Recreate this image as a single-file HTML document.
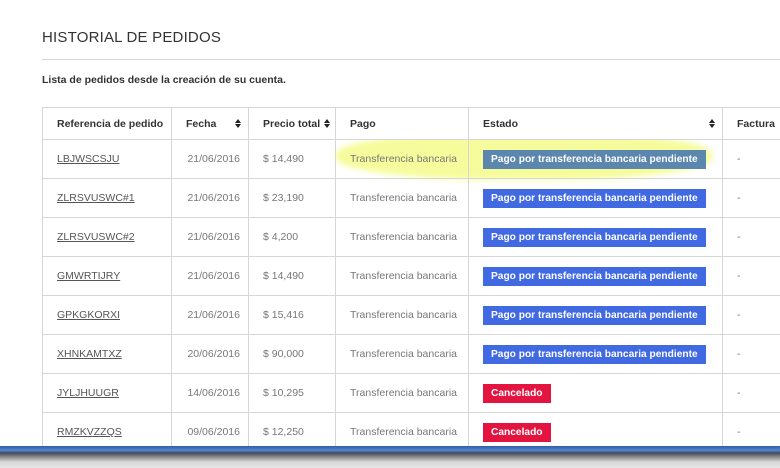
<!DOCTYPE html>
<html><head><meta charset="utf-8"><style>
*{margin:0;padding:0;box-sizing:border-box}
body{width:780px;height:468px;overflow:hidden;background:#fff;font-family:"Liberation Sans",sans-serif;position:relative;color:#333}
.h{position:absolute;left:42px;top:29px;font-size:15px;color:#333;letter-spacing:0.2px}
.hr{position:absolute;left:42px;right:0;top:59px;border-top:1px solid #d6d6d6}
.sub{position:absolute;left:42px;top:74px;font-size:10.5px;font-weight:bold;color:#333}
table{position:absolute;left:42px;top:107px;border-collapse:collapse;font-size:10.5px;table-layout:fixed;width:760px;z-index:2}
th,td{border:1px solid #d6d6d6;padding:0 0 0 14px;text-align:left;white-space:nowrap;overflow:hidden}
th{height:32px;font-weight:bold;color:#333;position:relative;background:#fff}
td{height:39px;color:#777}
td.ref{text-decoration:underline;color:#555}
td.f{text-align:right;padding-right:8px;padding-left:0}
.s{position:absolute;right:6px;top:10px;width:7px;height:11px}
.s:before,.s:after{content:"";position:absolute;left:0;border-left:3.5px solid transparent;border-right:3.5px solid transparent}
.s:before{top:1px;border-bottom:4px solid #222}
.s:after{top:6px;border-top:4px solid #222}
.b{display:inline-block;color:#fff;font-weight:bold;padding:4px 8px;font-size:10.2px}
.bl{background:#4169e1}.gr{background:#5b86ad}.rd{background:#e3143f}
.hl{position:absolute;left:336px;top:132px;width:376px;height:48px;background:rgba(240,250,90,0.6);border-radius:45%;filter:blur(3px);z-index:1}
.tb1{position:absolute;left:0;top:446px;width:780px;height:7px;background:linear-gradient(#2f5aa8,#5b86c8 60%,#2e4f8a);z-index:3}
.tb2{position:absolute;left:0;top:453px;width:780px;height:15px;background:linear-gradient(#4a4a4a,#888 25%,#d8d8d8 60%,#e6e6e6);z-index:3}
</style></head><body>
<div class="h">HISTORIAL DE PEDIDOS</div>
<div class="hr"></div>
<div class="sub">Lista de pedidos desde la creación de su cuenta.</div>
<div class="hl"></div>
<table>
<colgroup><col style="width:129px"><col style="width:77px"><col style="width:87px"><col style="width:133px"><col style="width:254px"><col style="width:80px"></colgroup>
<tr><th>Referencia de pedido</th><th>Fecha<span class="s"></span></th><th>Precio total<span class="s" style="right:4px"></span></th><th>Pago</th><th>Estado<span class="s"></span></th><th style="border-right:none">Factura</th></tr>
<tr><td class="ref">LBJWSCSJU</td><td class="f">21/06/2016</td><td>$ 14,490</td><td>Transferencia bancaria</td><td><span class="b gr">Pago por transferencia bancaria pendiente</span></td><td>-</td></tr>
<tr><td class="ref">ZLRSVUSWC#1</td><td class="f">21/06/2016</td><td>$ 23,190</td><td>Transferencia bancaria</td><td><span class="b bl">Pago por transferencia bancaria pendiente</span></td><td>-</td></tr>
<tr><td class="ref">ZLRSVUSWC#2</td><td class="f">21/06/2016</td><td>$ 4,200</td><td>Transferencia bancaria</td><td><span class="b bl">Pago por transferencia bancaria pendiente</span></td><td>-</td></tr>
<tr><td class="ref">GMWRTIJRY</td><td class="f">21/06/2016</td><td>$ 14,490</td><td>Transferencia bancaria</td><td><span class="b bl">Pago por transferencia bancaria pendiente</span></td><td>-</td></tr>
<tr><td class="ref">GPKGKORXI</td><td class="f">21/06/2016</td><td>$ 15,416</td><td>Transferencia bancaria</td><td><span class="b bl">Pago por transferencia bancaria pendiente</span></td><td>-</td></tr>
<tr><td class="ref">XHNKAMTXZ</td><td class="f">20/06/2016</td><td>$ 90,000</td><td>Transferencia bancaria</td><td><span class="b bl">Pago por transferencia bancaria pendiente</span></td><td>-</td></tr>
<tr><td class="ref">JYLJHUUGR</td><td class="f">14/06/2016</td><td>$ 10,295</td><td>Transferencia bancaria</td><td><span class="b rd">Cancelado</span></td><td>-</td></tr>
<tr><td class="ref">RMZKVZZQS</td><td class="f">09/06/2016</td><td>$ 12,250</td><td>Transferencia bancaria</td><td><span class="b rd">Cancelado</span></td><td>-</td></tr>
</table>
<div class="tb1"></div><div class="tb2"></div>
</body></html>
